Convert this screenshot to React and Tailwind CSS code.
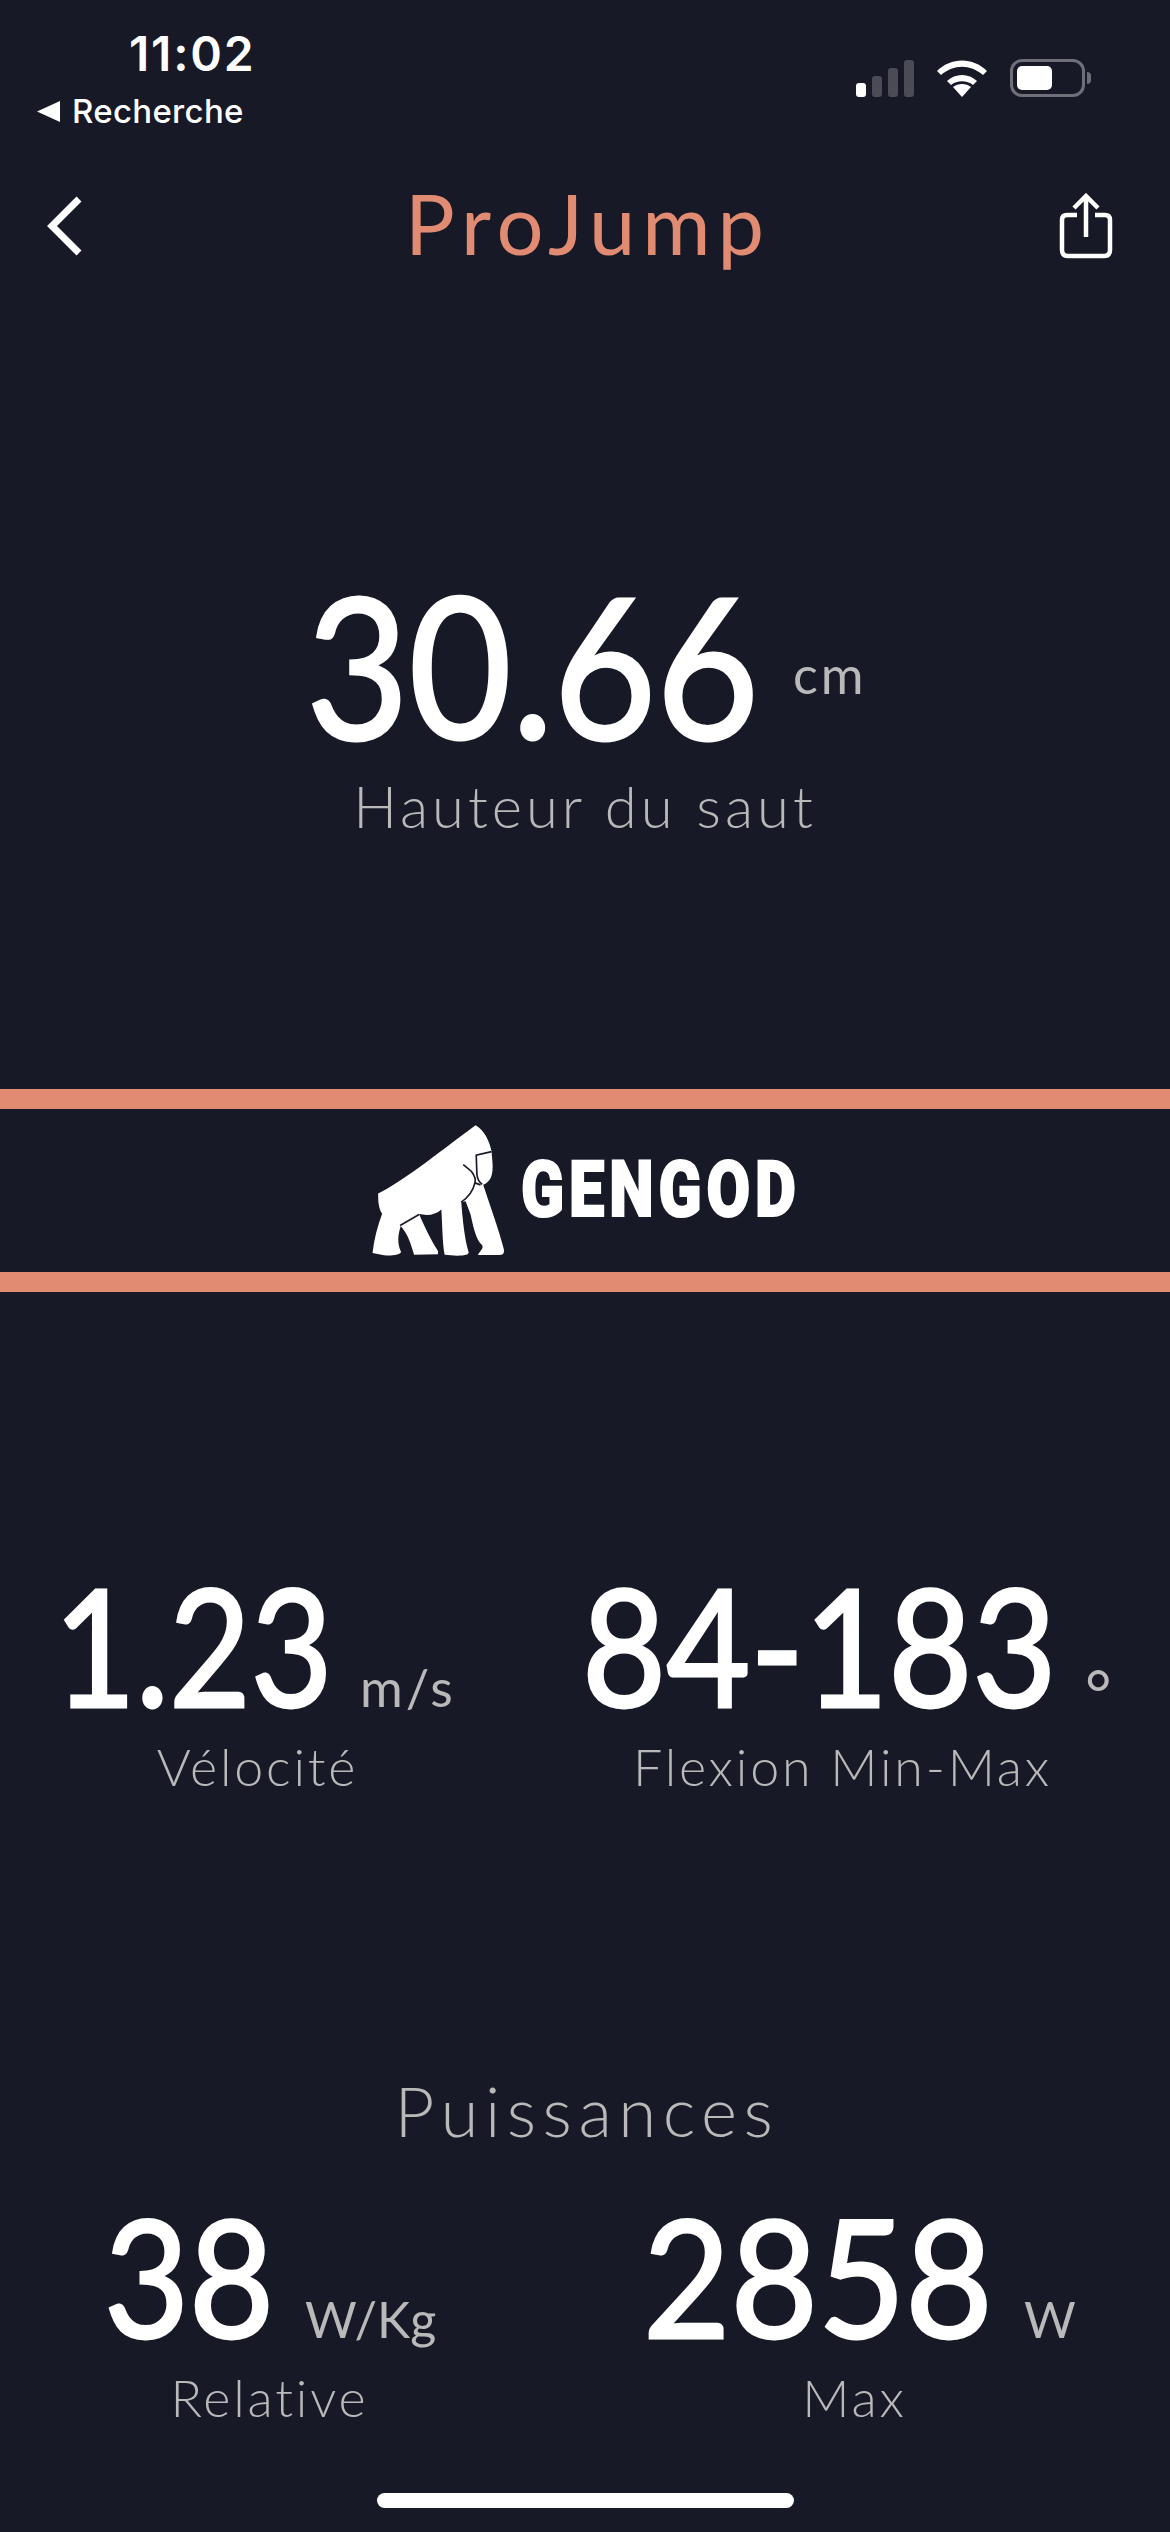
import React from "react";

const F = "font-['Lato',sans-serif]";
const BG = "#171926";

function Gorilla() {
  return (
    <svg width="133" height="131" viewBox="94 136 399 394" className="block shrink-0">
      <path fill="#fff" d="M405 137 C430 150 447 185 453 215 L456 250 C458 285 452 305 428 316 C445 370 475 450 490 510 C492 522 488 527 478 527 L412 527 C418 515 430 508 425 498 C405 480 398 440 390 405 L375 365 L362 368 C366 420 372 480 384 518 C386 525 375 529 350 529 L312 526 C305 490 305 430 302 390 C285 405 265 410 235 404 C255 450 275 490 292 515 L292 525 L220 526 C210 495 205 470 180 440 C170 470 170 495 181 518 C175 528 150 530 130 528 L95 521 C100 480 110 440 124 403 C112 385 112 360 112 342 C180 310 280 230 405 137 Z" />
      <path fill="none" stroke={BG} strokeWidth="5" d="M453 216 L407 227 L409 285 Q411 305 425 314" />
      <path fill="none" stroke={BG} strokeWidth="5" d="M368 255 L392 275 Q408 296 403 310 Q395 345 362 368 M403 310 L420 316" />
      <path fill="none" stroke={BG} strokeWidth="5" d="M178 438 L235 405" />
    </svg>
  );
}

function Icons() {
  return (
    <div className="flex items-end gap-[23px]">
      <div className="flex items-end gap-[6px]">
        <div className="w-[10px] h-[14px] rounded-[3px] bg-white" />
        <div className="w-[10px] h-[21px] rounded-[3px] bg-[#4a4b55]" />
        <div className="w-[10px] h-[29px] rounded-[3px] bg-[#4a4b55]" />
        <div className="w-[10px] h-[37px] rounded-[3px] bg-[#4a4b55]" />
      </div>
      <svg width="50" height="37" viewBox="0 0 50 37" className="block">
        <path fill="#fff" d="M25 37 L16 27 C21 23 29 23 34 27 Z" />
        <path fill="#fff" d="M10 21 C18 13 32 13 40 21 L36 25 C30 20 20 20 14 25 Z" />
        <path fill="#fff" d="M0 11 C14 -3 36 -3 50 11 L46 15 C33 4 17 4 4 15 Z" />
      </svg>
      <div className="flex items-center">
        <div className="w-[75px] h-[38px] rounded-[12px] border-[3px] border-[#6e6f78] p-[4px] flex">
          <div className="w-[35px] h-full rounded-[5px] bg-white" />
        </div>
        <div className="w-[4px] h-[12px] rounded-r-full bg-[#6e6f78] ml-[2px]" />
      </div>
    </div>
  );
}

const valueCls = "block shrink-0 whitespace-nowrap origin-left text-white leading-none font-normal [-webkit-text-stroke:3px_white]";
const unitCls = "text-[#b9b9b9] leading-none whitespace-nowrap";
const labelCls = "mt-[10px] text-center text-[#b9b9b9] text-[52px] leading-[60px] tracking-[2.8px] font-light";

export default function App() {
  return (
    <div className={`w-[1170px] h-[2532px] bg-[#171926] overflow-hidden flex flex-col ${F}`}>
      {/* Status bar */}
      <div className="h-[150px] shrink-0 flex justify-between font-['Inter',sans-serif] text-white">
        <div className="flex flex-col pl-[37px] pt-[28px]">
          <div className="pl-[92px] text-[48px] leading-[52px] font-semibold tracking-[1.8px]">11:02</div>
          <div className="flex items-center gap-[12px] mt-[12px]">
            <svg width="23" height="21" viewBox="0 0 23 21" className="block"><path fill="#fff" d="M0 10.5 L23 0 V21 Z" /></svg>
            <span className="text-[33px] leading-[38px] font-medium tracking-[0.3px]">Recherche</span>
          </div>
        </div>
        <div className="pt-[59px] pr-[79px]"><Icons /></div>
      </div>

      {/* Nav */}
      <div className="h-[152px] shrink-0 flex items-center pl-[46px] pr-[57px]">
        <div className="w-[60px] shrink-0">
          <svg width="38" height="62" viewBox="0 0 38 62" className="block">
            <path d="M33 4 L6 31 L33 58" fill="none" stroke="#fff" strokeWidth="7" />
          </svg>
        </div>
        <div className="flex-1 text-center text-[#e28b73] text-[83px] leading-none font-normal tracking-[7px] pl-[17px] -mt-[6px]">ProJump</div>
        <div className="w-[60px] shrink-0 flex justify-end">
          <svg width="54" height="66" viewBox="0 0 54 66" className="block">
            <path d="M18 22 H8 Q3 22 3 27 V57 Q3 63 9 63 H45 Q51 63 51 57 V27 Q51 22 46 22 H36" fill="none" stroke="#fff" strokeWidth="4.5" />
            <path d="M27 44 V4 M15 15 L27 3 L39 15" fill="none" stroke="#fff" strokeWidth="4.5" />
          </svg>
        </div>
      </div>

      {/* Main */}
      <div className="mt-[263px] flex items-baseline pl-[306px]">
        <span className={`${valueCls} text-[197px] w-[440px] scale-x-[0.9]`}>30.66</span>
        <span className={`${unitCls} text-[52px] tracking-[3px] ml-[47px] -translate-y-[45px]`}>cm</span>
      </div>
      <div className="mt-[9px] text-center text-[#b9b9b9] text-[58px] leading-[70px] tracking-[4px] font-light">Hauteur du saut</div>

      {/* Banner */}
      <div className="mt-[248px] h-[203px] shrink-0 border-y-[20px] border-[#e28b73] flex items-center pl-[372px]">
        <Gorilla />
        <span className="block w-[273px] ml-[16px] origin-left whitespace-nowrap font-['Roboto',sans-serif] font-black text-white text-[77px] leading-none tracking-[6px] scale-x-[0.82] [-webkit-text-stroke:2px_white]">GENGOD</span>
      </div>

      {/* Two stats */}
      <div className="mt-[271px] grid grid-cols-[515px_1fr]">
        <div>
          <div className="flex items-baseline pl-[54px]">
            <span className={`${valueCls} text-[163px] w-[262px] scale-x-[0.865]`}>1.23</span>
            <span className={`${unitCls} text-[52px] tracking-[3px] ml-[44px]`}>m/s</span>
          </div>
          <div className={labelCls}>Vélocité</div>
        </div>
        <div>
          <div className="flex items-baseline pl-[67px]">
            <span className={`${valueCls} text-[163px] w-[463px] scale-x-[0.89]`}>84-183</span>
            <span className={`${unitCls} text-[64px] ml-[40px] translate-y-[10px]`}>°</span>
          </div>
          <div className={labelCls}>Flexion Min-Max</div>
        </div>
      </div>

      {/* Puissances */}
      <div className="mt-[275px] pl-[4px] text-center text-[#b9b9b9] text-[69px] leading-[80px] tracking-[6.5px] font-light">Puissances</div>
      <div className="mt-[43px] grid grid-cols-[539px_1fr]">
        <div>
          <div className="flex items-baseline pl-[104px]">
            <span className={`${valueCls} text-[163px] w-[160px] scale-x-[0.9]`}>38</span>
            <span className={`${unitCls} text-[50px] ml-[41px]`}>W/Kg</span>
          </div>
          <div className={labelCls}>Relative</div>
        </div>
        <div>
          <div className="flex items-baseline pl-[104px]">
            <span className={`${valueCls} text-[163px] w-[339px] scale-x-[0.925]`}>2858</span>
            <span className={`${unitCls} text-[50px] ml-[42px]`}>W</span>
          </div>
          <div className={labelCls}>Max</div>
        </div>
      </div>

      {/* Home indicator */}
      <div className="mt-auto mb-[24px] mx-auto w-[417px] h-[15px] rounded-full bg-white" />
    </div>
  );
}
